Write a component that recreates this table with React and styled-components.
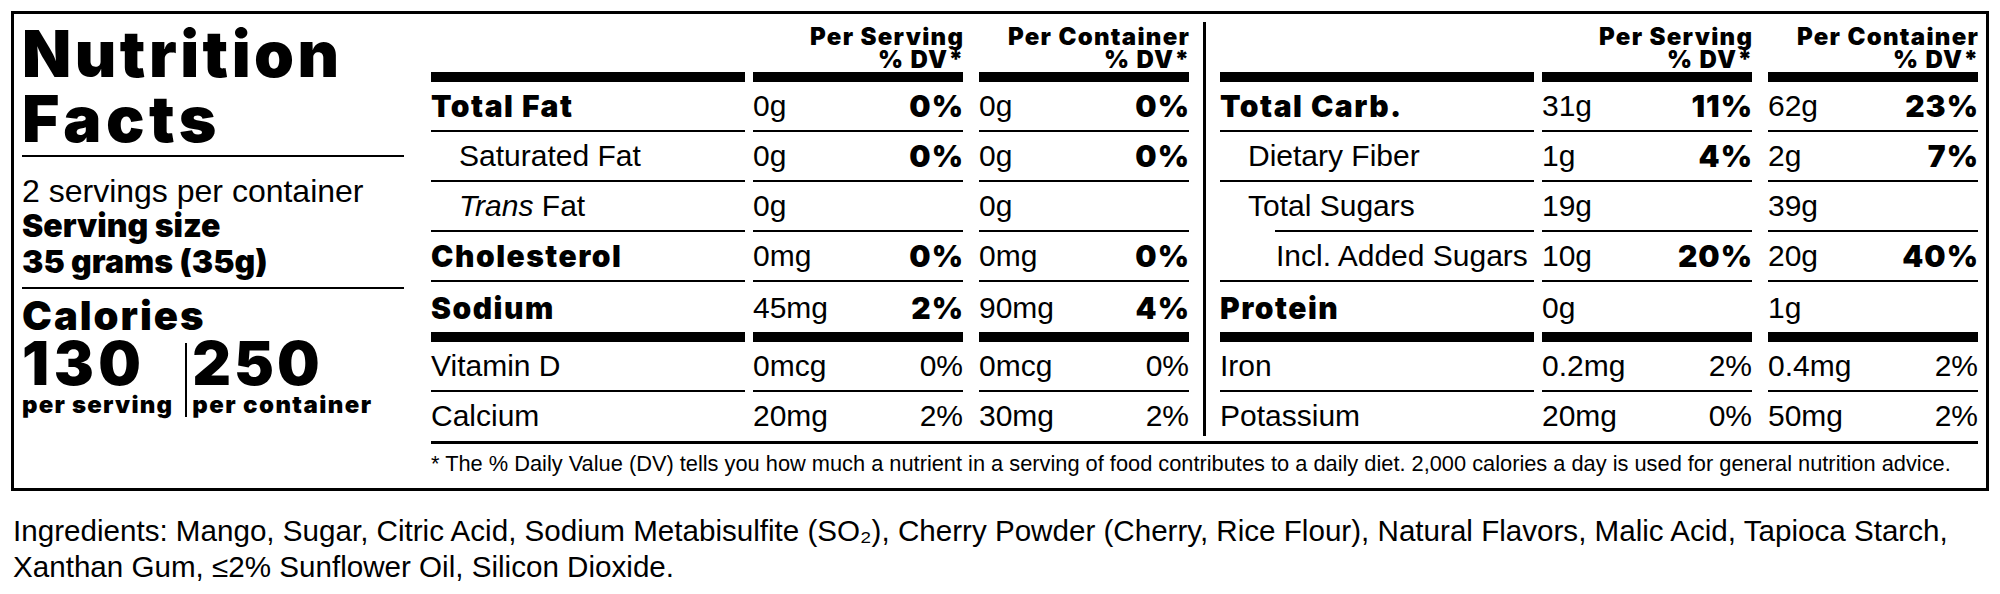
import styled, { createGlobalStyle } from "styled-components";

const GlobalStyle = createGlobalStyle`
  html, body {
    margin: 0;
    padding: 0;
    background: #fff;
  }
  body {
    font-family: "Liberation Sans", Arial, sans-serif;
    color: #000;
  }
`;

const heavy = `
  font-family: Inter, "Liberation Sans", sans-serif;
  font-weight: 900;
`;

const leftRows = [
  { name: "Total Fat", bold: true, serv: ["0g", "0%"], cont: ["0g", "0%"], strong: true },
  { name: "Saturated Fat", indent: 1, serv: ["0g", "0%"], cont: ["0g", "0%"], strong: true },
  { name: <><i>Trans</i> Fat</>, indent: 1, serv: ["0g", ""], cont: ["0g", ""] },
  { name: "Cholesterol", bold: true, serv: ["0mg", "0%"], cont: ["0mg", "0%"], strong: true },
  { name: "Sodium", bold: true, serv: ["45mg", "2%"], cont: ["90mg", "4%"], strong: true, thick: true },
  { name: "Vitamin D", serv: ["0mcg", "0%"], cont: ["0mcg", "0%"] },
  { name: "Calcium", serv: ["20mg", "2%"], cont: ["30mg", "2%"], last: true },
];

const rightRows = [
  { name: "Total Carb.", bold: true, serv: ["31g", "11%"], cont: ["62g", "23%"], strong: true },
  { name: "Dietary Fiber", indent: 1, serv: ["1g", "4%"], cont: ["2g", "7%"], strong: true },
  { name: "Total Sugars", indent: 1, inset: 55, serv: ["19g", ""], cont: ["39g", ""] },
  { name: "Incl. Added Sugars", indent: 2, serv: ["10g", "20%"], cont: ["20g", "40%"], strong: true },
  { name: "Protein", bold: true, serv: ["0g", ""], cont: ["1g", ""], thick: true },
  { name: "Iron", serv: ["0.2mg", "2%"], cont: ["0.4mg", "2%"] },
  { name: "Potassium", serv: ["20mg", "0%"], cont: ["50mg", "2%"], last: true },
];

function NutrientTable({ rows }) {
  return (
    <Table>
      <HeadCell />
      <HeadCell $gap={8}>
        <span>Per Serving</span>
        <span>% DV*</span>
      </HeadCell>
      <HeadCell $gap={16}>
        <span>Per Container</span>
        <span>% DV*</span>
      </HeadCell>
      {rows.map((r, i) => {
        const rule = r.last ? 0 : r.thick ? 10 : 2;
        return [
          <Cell key={`n${i}`} $rule={rule} $thick={r.thick} $last={r.last} $inset={r.inset} $indent={r.indent || 0}>
            <Name $bold={r.bold}>{r.name}</Name>
          </Cell>,
          <Cell key={`s${i}`} $rule={rule} $thick={r.thick} $last={r.last} $gap={8}>
            <Amount>{r.serv[0]}</Amount>
            <Percent $bold={r.strong}>{r.serv[1]}</Percent>
          </Cell>,
          <Cell key={`c${i}`} $rule={rule} $thick={r.thick} $last={r.last} $gap={16}>
            <Amount>{r.cont[0]}</Amount>
            <Percent $bold={r.strong}>{r.cont[1]}</Percent>
          </Cell>,
        ];
      })}
    </Table>
  );
}

export default function App() {
  return (
    <Page>
      <GlobalStyle />
      <Label>
        <Side>
          <Title>
            Nutrition
            <br />
            <span>Facts</span>
          </Title>
          <Rule $top={4} />
          <Servings>
            <ServLine>2 servings per container</ServLine>
            <ServBold>Serving size</ServBold>
            <ServBold>35 grams (35g)</ServBold>
          </Servings>
          <Rule $top={7} />
          <CalTitle>Calories</CalTitle>
          <CalRow>
            <CalCol>
              <CalNum $spacing={4.5}>130</CalNum>
              <CalUnit $spacing={1.2}>per serving</CalUnit>
            </CalCol>
            <CalDivider />
            <CalCol>
              <CalNum $spacing={3}>250</CalNum>
              <CalUnit $spacing={1.4}>per container</CalUnit>
            </CalCol>
          </CalRow>
        </Side>
        <Main>
          <Tables>
            <NutrientTable rows={leftRows} />
            <VRule />
            <NutrientTable rows={rightRows} />
          </Tables>
          <Footnote>
            * The % Daily Value (DV) tells you how much a nutrient in a serving of food contributes to a daily
            diet. 2,000 calories a day is used for general nutrition advice.
          </Footnote>
        </Main>
      </Label>
      <Ingredients>
        Ingredients: Mango, Sugar, Citric Acid, Sodium Metabisulfite (SO₂), Cherry Powder (Cherry, Rice Flour),
        Natural Flavors, Malic Acid, Tapioca Starch, Xanthan Gum, ≤2% Sunflower Oil, Silicon Dioxide.
      </Ingredients>
    </Page>
  );
}

const Page = styled.div`
  width: 2000px;
  box-sizing: border-box;
  padding: 11px 11px 0 11px;
`;

const Label = styled.section`
  display: flex;
  border: 3px solid #000;
  padding: 0 8px;
`;

const Side = styled.div`
  width: 382px;
  flex: none;
  display: flex;
  flex-direction: column;
`;

const Title = styled.h1`
  margin: 7px 0 0;
  ${heavy}
  font-size: 64px;
  line-height: 65px;
  letter-spacing: 3.5px;

  span {
    letter-spacing: 4.5px;
  }
`;

const Rule = styled.div`
  margin-top: ${({ $top }) => $top}px;
  height: 2px;
  background: #000;
`;

const Servings = styled.div`
  padding-top: 17px;
`;

const ServLine = styled.div`
  font-size: 32px;
  line-height: 34px;
`;

const ServBold = styled.div`
  ${heavy}
  font-size: 32px;
  line-height: 36px;
`;

const CalTitle = styled.div`
  ${heavy}
  font-size: 40px;
  line-height: 35px;
  letter-spacing: 2px;
  margin-top: 9px;
`;

const CalRow = styled.div`
  display: flex;
`;

const CalCol = styled.div`
  display: flex;
  flex-direction: column;
`;

const CalNum = styled.div`
  ${heavy}
  font-size: 60px;
  line-height: 60px;
  letter-spacing: ${({ $spacing }) => $spacing}px;
`;

const CalUnit = styled.div`
  ${heavy}
  font-size: 24px;
  line-height: 24px;
  letter-spacing: ${({ $spacing }) => $spacing}px;
`;

const CalDivider = styled.div`
  width: 2px;
  background: #000;
  margin: 10px 5px 0 12px;
`;

const Main = styled.div`
  margin-left: 27px;
  flex: 1;
  display: flex;
  flex-direction: column;
`;

const Tables = styled.div`
  display: flex;
  gap: 14px;
  padding-top: 8px;
`;

const VRule = styled.div`
  flex: none;
  width: 3px;
  background: #000;
  margin-bottom: 5px;
`;

const Table = styled.div`
  width: 758px;
  display: grid;
  grid-template-columns: 314px 218px 226px;
`;

const HeadCell = styled.div`
  margin-left: ${({ $gap }) => $gap || 0}px;
  height: 49px;
  padding-bottom: 1px;
  border-bottom: 10px solid #000;
  display: flex;
  flex-direction: column;
  justify-content: flex-end;
  align-items: flex-end;
  ${heavy}
  font-size: 24px;
  line-height: 23px;
  letter-spacing: 1.3px;

  span {
    margin-right: -1.3px;
  }
`;

const Cell = styled.div`
  margin-left: ${({ $gap }) => $gap || 0}px;
  padding-left: ${({ $indent }) => ($indent || 0) * 28}px;
  padding-top: ${({ $thick }) => ($thick ? 2 : 0)}px;
  height: ${({ $last }) => ($last ? 49 : 48)}px;
  display: flex;
  justify-content: space-between;
  align-items: flex-start;
  border-bottom: ${({ $rule, $inset }) => ($inset ? 0 : $rule)}px solid #000;
  ${({ $inset }) =>
    $inset &&
    `
    padding-bottom: 2px;
    background: linear-gradient(#000, #000) no-repeat right bottom / calc(100% - ${$inset}px) 2px;
  `}
`;

const Name = styled.span`
  font-size: 30px;
  line-height: 48px;
  white-space: nowrap;
  ${({ $bold }) => $bold && `${heavy} letter-spacing: 1.5px;`}
`;

const Amount = styled.span`
  font-size: 30px;
  line-height: 48px;
`;

const Percent = styled.span`
  font-size: 30px;
  line-height: 48px;
  ${({ $bold }) => $bold && `${heavy} letter-spacing: 1px; margin-right: -1px;`}
`;

const Footnote = styled.p`
  margin: 0;
  border-top: 3px solid #000;
  font-size: 21.8px;
  line-height: 40px;
  padding-bottom: 4px;
  white-space: nowrap;
`;

const Ingredients = styled.p`
  margin: 22px 0 0;
  padding-left: 2px;
  font-size: 29.6px;
  line-height: 36px;
`;
